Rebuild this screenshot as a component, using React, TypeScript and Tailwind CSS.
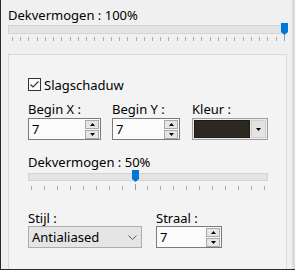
import React from "react";

const FONT = "font-['Noto_Sans','Liberation_Sans',sans-serif]";

function Thumb() {
  return (
    <svg width="7" height="12" viewBox="0 0 7 12" className="block">
      <path d="M0 0 H7 V9 L3.5 12 L0 9 Z" fill="#0078d7" />
    </svg>
  );
}

function Ticks({ count, longIndex, className }: { count: number; longIndex: number; className: string }) {
  return (
    <div className={`flex justify-between items-end ${className}`}>
      {Array.from({ length: count }).map((_, i) => (
        <div key={i} className={i === longIndex ? "w-px h-[6px] bg-[#9a9a9a]" : "w-px h-[4px] bg-[#a8a8a8]"} />
      ))}
    </div>
  );
}

function SpinBtn({ up }: { up?: boolean }) {
  return (
    <div className="w-[14px] h-[9px] border border-[#a8a8a8] bg-[#e6e6e6] flex items-center justify-center">
      <svg width="5" height="3" viewBox="0 0 5 3" className="block">
        {up ? <path d="M0 3 L2.5 0 L5 3 Z" fill="#000" /> : <path d="M0 0 L5 0 L2.5 3 Z" fill="#000" />}
      </svg>
    </div>
  );
}

function SpinBox({ w, value }: { w: string; value: string }) {
  return (
    <div className={`${w} h-[22px] border border-[#7a7a7a] bg-[#fbfbfb] flex items-center justify-between pl-[3px] pr-[1px]`}>
      <span>{value}</span>
      <div className="flex flex-col gap-px">
        <SpinBtn up />
        <SpinBtn />
      </div>
    </div>
  );
}

export default function App() {
  return (
    <div className={`${FONT} w-[295px] h-[270px] overflow-hidden flex border-l border-b border-[#2a2a2a] bg-[#f0f0f0] text-[13px] leading-[16px] text-black`}>
      <div className="w-[291px] h-full flex flex-col pl-[7px] pt-[7px]">
        <div className="h-[16px]">Dekvermogen : 100%</div>
        <div className="relative w-[277px] h-[13px]">
          <div className="mt-[2px] h-[9px] border border-[#d4d4d4] bg-[#e4e4e4]" />
          <div className="absolute left-[273px] top-0">
            <Thumb />
          </div>
        </div>
        <Ticks count={34} longIndex={33} className="w-[277px] pl-[4px] mt-px h-[6px]" />

        <div className="mt-[13px] w-[279px] h-[240px] border border-[#d9d9d9] bg-[#f3f3f3] pl-[19px] flex flex-col shrink-0">
          <div className="mt-[23px] h-[13px] flex items-center gap-[3px]">
            <div className="w-[13px] h-[13px] border border-[#333333] bg-[#fafafa] flex items-center justify-center">
              <svg width="11" height="11" viewBox="0 0 11 11" className="block">
                <path d="M1.5 5.5 L4 8 L9.5 2.5" fill="none" stroke="#333" strokeWidth="1.2" />
              </svg>
            </div>
            <span>Slagschaduw</span>
          </div>

          <div className="mt-[10px] flex">
            <div className="w-[84px] h-[16px]">Begin X :</div>
            <div className="w-[80px] h-[16px]">Begin Y :</div>
            <div className="h-[16px]">Kleur :</div>
          </div>
          <div className="mt-px flex">
            <SpinBox w="w-[73px]" value="7" />
            <div className="w-[11px]" />
            <SpinBox w="w-[68px]" value="7" />
            <div className="w-[12px]" />
            <div className="w-[76px] h-[22px] border border-[#a0a0a0] bg-[#ececec] p-px flex gap-px">
              <div className="w-[56px] h-full border border-[#1d1a16] bg-[#2d2821]" />
              <div className="w-[15px] h-full border border-[#cfcfcf] bg-[#e3e3e3] flex items-center justify-center">
                <svg width="5" height="3" viewBox="0 0 5 3" className="block">
                  <path d="M0 0 L5 0 L2.5 3 Z" fill="#000" />
                </svg>
              </div>
            </div>
          </div>

          <div className="mt-[14px] h-[16px]">Dekvermogen : 50%</div>
          <div className="relative w-[240px] h-[13px]">
            <div className="mt-[3px] h-[8px] border border-[#d4d4d4] bg-[#e4e4e4]" />
            <div className="absolute left-[104px] top-0">
              <Thumb />
            </div>
          </div>
          <Ticks count={19} longIndex={8} className="w-[237px] pl-[3px] mt-px h-[6px]" />

          <div className="mt-[20px] flex">
            <div className="w-[128px] h-[16px]">Stijl :</div>
            <div className="h-[16px]">Straal :</div>
          </div>
          <div className="flex">
            <div className="w-[114px] h-[22px] border border-[#adadad] bg-[#e5e5e5] flex items-center justify-between pl-[3px] pr-[4px]">
              <span>Antialiased</span>
              <svg width="9" height="5" viewBox="0 0 9 5" className="block">
                <path d="M0.5 0.5 L4.5 4.5 L8.5 0.5" fill="none" stroke="#5a5a5a" strokeWidth="1" />
              </svg>
            </div>
            <div className="w-[14px]" />
            <SpinBox w="w-[66px]" value="7" />
          </div>
        </div>
      </div>
      <div className="w-[3px] h-full bg-[#dcdcdc]" />
    </div>
  );
}
